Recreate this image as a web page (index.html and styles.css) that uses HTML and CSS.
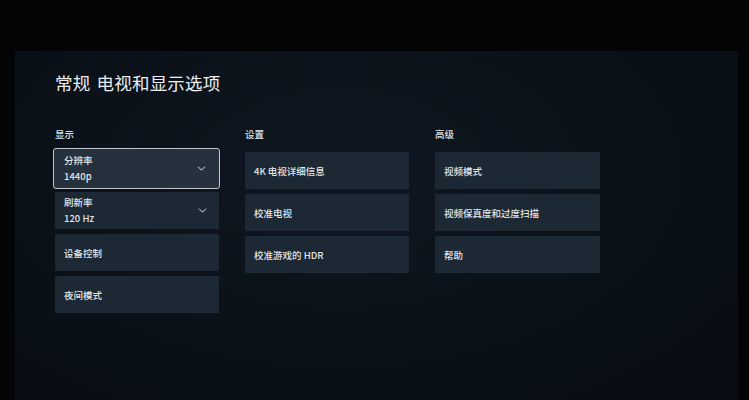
FILE: index.html
```html
<!DOCTYPE html>
<html lang="zh-CN">
<head>
<meta charset="utf-8">
<title>电视和显示选项</title>
<link rel="stylesheet" href="styles.css">
</head>
<body>
<div class="frame">
  <div class="screen">
    <h1 class="title"><span class="crumb">常规</span> 电视和显示选项</h1>
    <div class="columns">
      <section class="col">
        <h2 class="heading">显示</h2>
        <div class="list">
          <div class="card card-two card-focus">
            <div class="text">
              <div class="label">分辨率</div>
              <div class="value">1440p</div>
            </div>
            <svg class="chev" viewBox="0 0 10 6" width="9" height="5"><polyline points="0.8,0.8 5,5 9.2,0.8" fill="none" stroke="#e4e6e8" stroke-width="1.2"/></svg>
          </div>
          <div class="card card-two">
            <div class="text">
              <div class="label">刷新率</div>
              <div class="value">120 Hz</div>
            </div>
            <svg class="chev" viewBox="0 0 10 6" width="9" height="5"><polyline points="0.8,0.8 5,5 9.2,0.8" fill="none" stroke="#e4e6e8" stroke-width="1.2"/></svg>
          </div>
          <div class="card">设备控制</div>
          <div class="card">夜间模式</div>
        </div>
      </section>
      <section class="col">
        <h2 class="heading">设置</h2>
        <div class="list">
          <div class="card">4K 电视详细信息</div>
          <div class="card">校准电视</div>
          <div class="card">校准游戏的 HDR</div>
        </div>
      </section>
      <section class="col">
        <h2 class="heading">高级</h2>
        <div class="list">
          <div class="card">视频模式</div>
          <div class="card">视频保真度和过度扫描</div>
          <div class="card">帮助</div>
        </div>
      </section>
    </div>
  </div>
</div>
</body>
</html>
```

FILE: styles.css
```css
* { box-sizing: border-box; }

html, body {
  margin: 0;
  padding: 0;
  width: 749px;
  height: 400px;
  overflow: hidden;
  background: #020304;
  font-family: "Noto Sans CJK SC", "Noto Sans", "Liberation Sans", sans-serif;
  color: #e6e8ea;
}

.frame {
  height: 400px;
  padding: 51px 11px 0 15px;
  background: #030405;
}

.screen {
  height: 349px;
  padding: 19px 0 0 40px;
  background:
    radial-gradient(ellipse at 45% 35%, #0f1721 0%, #0b121a 45%, #080d13 100%);
}

.title {
  margin: 0;
  font-size: 17.5px;
  font-weight: 400;
  line-height: 26px;
  color: #eceef0;
  letter-spacing: 0.2px;
}

.crumb { margin-right: 2px; }

.columns {
  margin-top: 31px;
  display: grid;
  grid-template-columns: 164px 164px 165px;
  column-gap: 26px;
}

.heading {
  margin: 0 0 11px 0;
  font-size: 9.5px;
  font-weight: 500;
  line-height: 14px;
  color: #dfe2e5;
}

.list {
  display: flex;
  flex-direction: column;
  gap: 5px;
}

.card {
  height: 37px;
  display: flex;
  align-items: center;
  padding: 0 9px;
  background: #1c2833;
  font-size: 9.5px;
  font-weight: 500;
  color: #e3e6e9;
}

.card-two {
  justify-content: space-between;
}

.text {
  display: flex;
  flex-direction: column;
  gap: 3px;
  line-height: 13px;
}

.value { font-size: 9.5px; }

.chev {
  display: block;
  margin-right: 3px;
}

.card-focus {
  height: 41px;
  margin: -4px -1px -2px -2px;
  padding: 0 10px 0 10px;
  background: #25313d;
  border: 1.5px solid #bfc5cb;
  border-radius: 3px;
}
```
